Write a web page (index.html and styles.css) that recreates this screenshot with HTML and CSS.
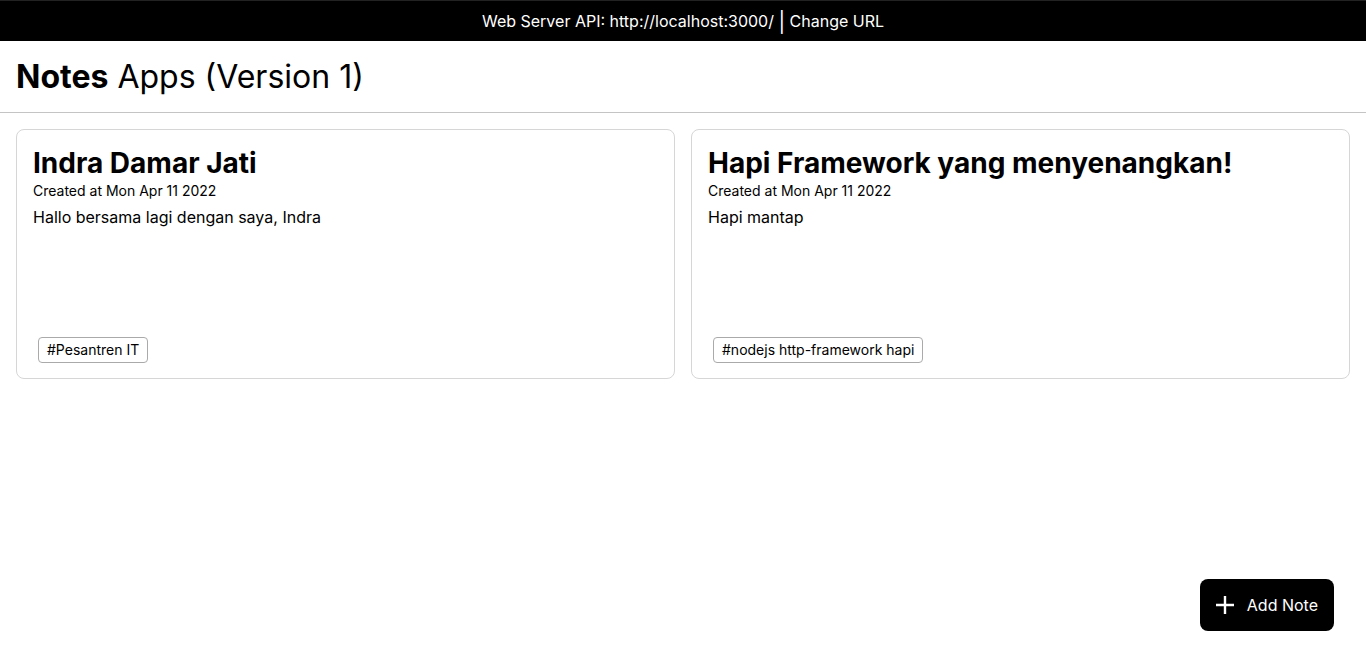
FILE: index.html
```html
<!DOCTYPE html>
<html lang="id">
<head>
<meta charset="utf-8">
<title>Notes Apps</title>
<link rel="stylesheet" href="styles.css">
</head>
<body>
<div class="topbar">Web Server API: http://localhost:3000/ <span class="sep">|</span> Change URL</div>
<header class="app-header">
  <h1><strong>Notes</strong> Apps (Version 1)</h1>
</header>
<main class="notes">
  <article class="note">
    <h2 class="note-title">Indra Damar Jati</h2>
    <p class="note-date">Created at Mon Apr 11 2022</p>
    <p class="note-body">Hallo bersama lagi dengan saya, Indra</p>
    <div class="note-tags"><span class="tag">#Pesantren IT</span></div>
  </article>
  <article class="note">
    <h2 class="note-title">Hapi Framework yang menyenangkan!</h2>
    <p class="note-date">Created at Mon Apr 11 2022</p>
    <p class="note-body">Hapi mantap</p>
    <div class="note-tags"><span class="tag">#nodejs http-framework hapi</span></div>
  </article>
</main>
<button class="add-btn" type="button">
  <svg width="18" height="18" viewBox="0 0 18 18" aria-hidden="true"><path d="M9 0v18M0 9h18" stroke="#fff" stroke-width="2.4" fill="none"/></svg>
  <span>Add Note</span>
</button>
</body>
</html>
```
FILE: styles.css
```css
* { box-sizing: border-box; }
body {
  margin: 0;
  font-family: Inter, "Noto Sans", sans-serif;
  color: #000;
  background: #fff;
}
.topbar {
  background: #000;
  color: #fff;
  border-top: 1px solid #222;
  height: 41px;
  line-height: 40px;
  text-align: center;
  font-size: 16px;
  white-space: nowrap;
}
.topbar .sep {
  display: inline-block;
  font-size: 20px;
  line-height: 20px;
  vertical-align: -2px;
}
.app-header {
  height: 72px;
  border-bottom: 1px solid #c4c4c4;
  display: flex;
  align-items: center;
  padding: 0 16px;
}
.app-header h1 {
  margin: 0;
  font-size: 32px;
  font-weight: 400;
}
.app-header strong { font-weight: 700; }
.notes {
  display: grid;
  grid-template-columns: 1fr 1fr;
  gap: 16px;
  padding: 16px;
}
.note {
  border: 1px solid #d6d6d6;
  border-radius: 8px;
  padding: 16px 16px 15px;
  height: 250px;
  display: flex;
  flex-direction: column;
}
.note-title {
  margin: 0;
  font-size: 28px;
  font-weight: 700;
  line-height: 34px;
}
.note-date {
  margin: 2px 0 0;
  font-size: 14px;
  line-height: 18px;
}
.note-body {
  margin: 6px 0 0;
  font-size: 16px;
  line-height: 22px;
}
.note-tags {
  margin-top: auto;
  padding-left: 5px;
  display: flex;
  gap: 6px;
}
.tag {
  border: 1px solid #aaa;
  border-radius: 4px;
  padding: 3px 8px;
  font-size: 14px;
  line-height: 18px;
}
.add-btn {
  position: fixed;
  right: 32px;
  bottom: 32px;
  height: 52px;
  background: #000;
  color: #fff;
  border: none;
  border-radius: 8px;
  display: flex;
  align-items: center;
  gap: 13px;
  padding: 0 16px;
  font-family: Inter, "Noto Sans", sans-serif;
  font-size: 16px;
  white-space: nowrap;
}
.add-btn svg { flex: none; }
```
